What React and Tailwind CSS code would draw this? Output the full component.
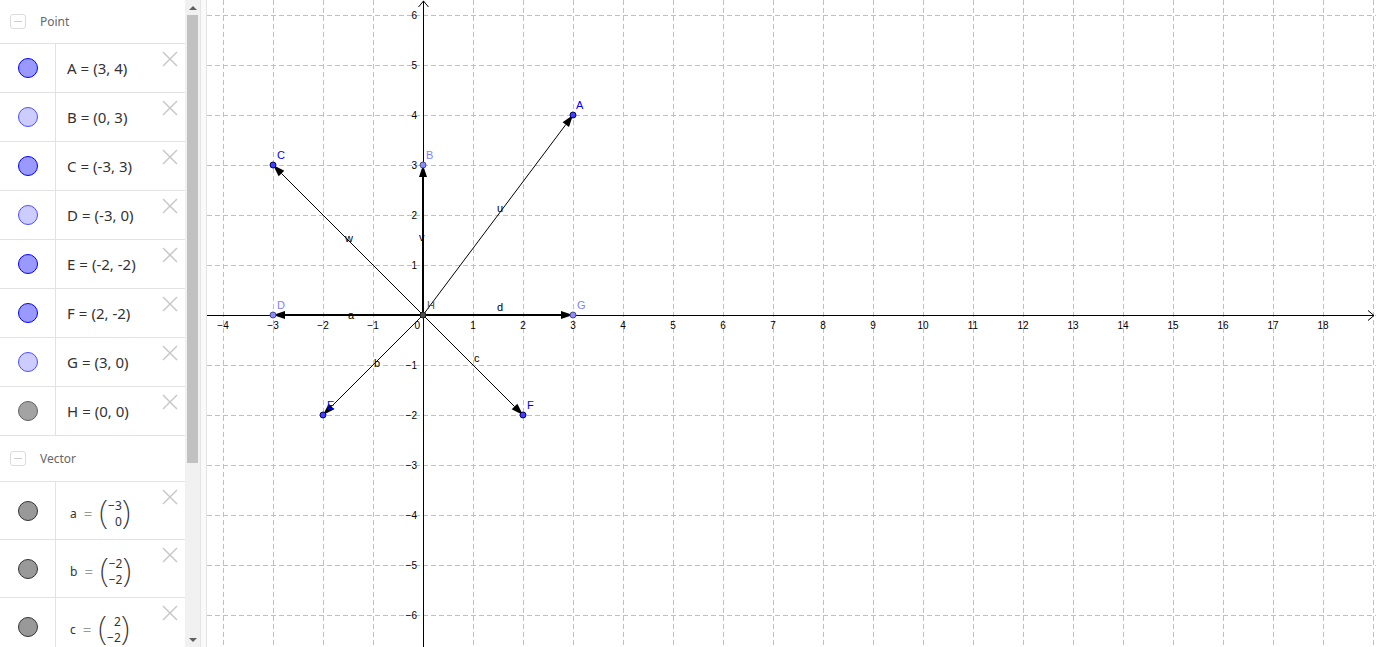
import React from "react";

const OX = 216; // origin in graph coords
const OY = 315;
const U = 50;

const points = [
  { n: "A", x: 3, y: 4, dark: true },
  { n: "B", x: 0, y: 3, dark: false },
  { n: "C", x: -3, y: 3, dark: true },
  { n: "D", x: -3, y: 0, dark: false },
  { n: "E", x: -2, y: -2, dark: true },
  { n: "F", x: 2, y: -2, dark: true },
  { n: "G", x: 3, y: 0, dark: false },
  { n: "H", x: 0, y: 0, gray: true },
];

const labelPos = {
  A: [369, 109],
  B: [219, 159],
  C: [70, 159],
  D: [70, 309],
  E: [120, 409],
  F: [320, 409],
  G: [370, 309],
  H: [220, 309],
};

const vectors = [
  { n: "u", to: [3, 4], lab: [290, 212], w: 1 },
  { n: "v", to: [0, 3], lab: [212, 241], w: 2 },
  { n: "w", to: [-3, 3], lab: [138, 242], w: 1 },
  { n: "a", to: [-3, 0], lab: [141, 319], w: 2 },
  { n: "d", to: [3, 0], lab: [290, 311], w: 2 },
  { n: "b", to: [-2, -2], lab: [167, 367], w: 1 },
  { n: "c", to: [2, -2], lab: [267, 362], w: 1 },
];

function px(x) {
  return OX + x * U;
}
function py(y) {
  return OY - y * U;
}

function Arrow({ to, w }) {
  const x2 = px(to[0]);
  const y2 = py(to[1]);
  const dx = x2 - OX;
  const dy = y2 - OY;
  const len = Math.hypot(dx, dy);
  const ux = dx / len;
  const uy = dy / len;
  const L = 12;
  const Wd = 4;
  const bx = x2 - ux * L;
  const by = y2 - uy * L;
  const p1 = `${x2},${y2}`;
  const p2 = `${bx - uy * Wd},${by + ux * Wd}`;
  const p3 = `${bx + uy * Wd},${by - ux * Wd}`;
  return (
    <g>
      <line x1={OX} y1={OY} x2={bx} y2={by} stroke="#000" strokeWidth={w} />
      <polygon points={`${p1} ${p2} ${p3}`} fill="#000" />
    </g>
  );
}

function Graph() {
  const vlines = [];
  for (let k = 0; k < 24; k++) vlines.push(16 + k * 50);
  const hlines = [];
  for (let k = 0; k < 13; k++) hlines.push(15 + k * 50);
  const xl = [];
  for (let i = -4; i <= 18; i++) if (i !== 0) xl.push(i);
  const yl = [6, 5, 4, 3, 2, 1, -1, -2, -3, -4, -5, -6];
  const fmt = (n) => (n < 0 ? "\u2212" + Math.abs(n) : String(n));
  return (
    <svg width="1169" height="647" className="block" style={{ fontFamily: "'Liberation Sans', Arial, sans-serif" }}>
      {vlines.map((x) => (
        <line key={"v" + x} x1={x + 0.5} y1={0} x2={x + 0.5} y2={647} stroke="#c0c0c0" strokeWidth="1" strokeDasharray="5,3" />
      ))}
      {hlines.map((y) => (
        <line key={"h" + y} x1={0} y1={y + 0.5} x2={1169} y2={y + 0.5} stroke="#c0c0c0" strokeWidth="1" strokeDasharray="5,3" />
      ))}
      <line x1={0} y1={OY + 0.5} x2={1167} y2={OY + 0.5} stroke="#000" strokeWidth="1" />
      <polyline points={`1161,${OY - 4.5} 1167,${OY + 0.5} 1161,${OY + 5.5}`} fill="none" stroke="#000" strokeWidth="1" />
      <line x1={OX + 0.5} y1={1} x2={OX + 0.5} y2={647} stroke="#000" strokeWidth="1" />
      <polyline points={`${OX - 4.5},7 ${OX + 0.5},1 ${OX + 5.5},7`} fill="none" stroke="#000" strokeWidth="1" />
      {xl.map((i) => (
        <text key={"xl" + i} x={px(i)} y={329} fontSize="10" textAnchor="middle" fill="#000">
          {fmt(i)}
        </text>
      ))}
      <text x={OX - 3} y={329} fontSize="10" textAnchor="end" fill="#000">0</text>
      {yl.map((i) => (
        <text key={"yl" + i} x={OX - 6} y={py(i) + 4} fontSize="10" textAnchor="end" fill="#000">
          {fmt(i)}
        </text>
      ))}
      {vectors.map((v) => (
        <Arrow key={v.n} to={v.to} w={v.w} />
      ))}
      {vectors.map((v) => (
        <text key={"vl" + v.n} x={v.lab[0]} y={v.lab[1]} fontSize="11" fill="#000">
          {v.n}
        </text>
      ))}
      {points.map((p) => {
        const fill = p.gray ? "#4d4d4d" : p.dark ? "#4040ff" : "#8c8cff";
        const stroke = p.gray ? "#222" : p.dark ? "#000060" : "#4a4a90";
        return <circle key={p.n} cx={px(p.x)} cy={py(p.y)} r="3" fill={fill} stroke={stroke} strokeWidth="1" />;
      })}
      {points.map((p) => {
        const col = p.gray ? "#555" : p.dark ? "#0000ff" : "#7f7fff";
        const [x, y] = labelPos[p.n];
        return (
          <text key={"pl" + p.n} x={x} y={y} fontSize="11" fill={col}>
            {p.n}
          </text>
        );
      })}
    </svg>
  );
}

function XIcon() {
  return (
    <svg width="16" height="16" viewBox="0 0 16 16" className="block">
      <line x1="1" y1="1" x2="15" y2="15" stroke="#c8c8c8" strokeWidth="1.5" />
      <line x1="15" y1="1" x2="1" y2="15" stroke="#c8c8c8" strokeWidth="1.5" />
    </svg>
  );
}

function Dot({ kind }) {
  const cls =
    kind === "dark"
      ? "bg-[#9999ff] border-[#0000ff]"
      : kind === "light"
      ? "bg-[#ccccff] border-[#4d4dff]"
      : kind === "gray"
      ? "bg-[#a3a3a3] border-[#606060]"
      : "bg-[#999999] border-[#333333]";
  return <div className={`w-[20px] h-[20px] rounded-full border ${cls}`} />;
}

function Header({ label, h }) {
  return (
    <div className={`flex items-center border-b border-[#e2e2e2] shrink-0 ${h}`}>
      <div className="ml-[10px] w-[16px] h-[15px] rounded-[3px] border border-[#dcdcdc] bg-white flex items-center justify-center">
        <div className="w-[8px] h-[1.5px] bg-[#cfcfcf]" />
      </div>
      <span className="ml-[14px] text-[12px] text-[#666]" style={{ fontFamily: "'Noto Sans', sans-serif" }}>
        {label}
      </span>
    </div>
  );
}

function PointRow({ name, val, kind }) {
  return (
    <div className="relative flex h-[49px] shrink-0 border-b border-[#e2e2e2]">
      <div className="w-[56px] shrink-0 border-r border-[#e2e2e2] flex items-center justify-center">
        <Dot kind={kind} />
      </div>
      <div className="flex items-center pl-[11px] text-[15px] text-[#333] whitespace-pre" style={{ fontFamily: "'Noto Sans', sans-serif" }}>
        <span>{name}</span>
        <span className="mx-[4px]">=</span>
        <span>{val}</span>
      </div>
      <div className="absolute right-[7px] top-[7px]">
        <XIcon />
      </div>
    </div>
  );
}

function VectorRow({ name, top, bottom }) {
  return (
    <div className="relative flex h-[58px] shrink-0 border-b border-[#e2e2e2]">
      <div className="w-[56px] shrink-0 border-r border-[#e2e2e2] flex items-center justify-center">
        <Dot kind="vec" />
      </div>
      <div className="flex items-center pl-[14px] pt-[6px] text-[#333]" style={{ fontFamily: "'Noto Sans', sans-serif" }}>
        <span className="text-[12px] leading-none">{name}</span>
        <span className="text-[15px] leading-none text-[#999] ml-[7px] mr-[7px]">=</span>
        <span className="text-[33px] leading-none font-extralight -mt-[5px]">(</span>
        <div className="flex flex-col items-end text-[12px] leading-[16px] min-w-[13px]">
          <span>{top}</span>
          <span>{bottom}</span>
        </div>
        <span className="text-[33px] leading-none font-extralight -mt-[5px]">)</span>
      </div>
      <div className="absolute right-[7px] top-[7px]">
        <XIcon />
      </div>
    </div>
  );
}

export default function App() {
  return (
    <div className="flex w-[1376px] h-[647px] overflow-hidden bg-white">
      <div className="w-[185px] shrink-0 flex flex-col overflow-hidden">
        <Header label="Point" h="h-[44px]" />
        <PointRow name="A" val="(3, 4)" kind="dark" />
        <PointRow name="B" val="(0, 3)" kind="light" />
        <PointRow name="C" val="(-3, 3)" kind="dark" />
        <PointRow name="D" val="(-3, 0)" kind="light" />
        <PointRow name="E" val="(-2, -2)" kind="dark" />
        <PointRow name="F" val="(2, -2)" kind="dark" />
        <PointRow name="G" val="(3, 0)" kind="light" />
        <PointRow name="H" val="(0, 0)" kind="gray" />
        <Header label="Vector" h="h-[46px]" />
        <VectorRow name="a" top={"\u22123"} bottom="0" />
        <VectorRow name="b" top={"\u22122"} bottom={"\u22122"} />
        <VectorRow name="c" top="2" bottom={"\u22122"} />
      </div>
      <div className="w-[15px] shrink-0 bg-[#f1f1f1] flex flex-col items-center">
        <div className="h-[15px] flex items-center justify-center">
          <div className="w-0 h-0 border-l-[4px] border-r-[4px] border-b-[4px] border-l-transparent border-r-transparent border-b-[#606060]" />
        </div>
        <div className="w-[11px] h-[448px] bg-[#c1c1c1]" />
        <div className="flex-1" />
        <div className="h-[15px] flex items-center justify-center">
          <div className="w-0 h-0 border-l-[4px] border-r-[4px] border-t-[4px] border-l-transparent border-r-transparent border-t-[#606060]" />
        </div>
      </div>
      <div className="w-[7px] shrink-0 bg-[#fafafa] border-l border-r border-[#e4e4e4]" />
      <div className="flex-1 overflow-hidden">
        <Graph />
      </div>
    </div>
  );
}
